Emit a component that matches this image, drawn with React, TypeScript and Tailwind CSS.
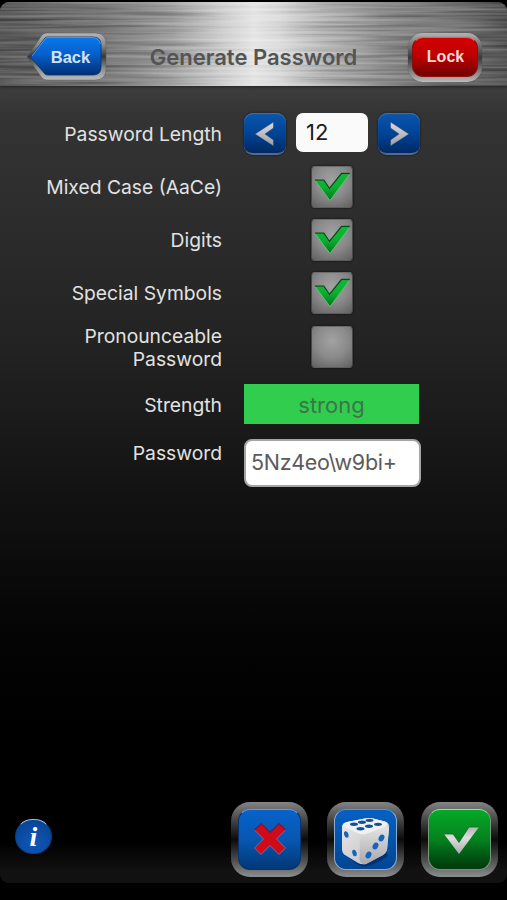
import React from "react";

const FONT = "font-['Inter','Liberation_Sans',sans-serif]";

function BrushedMetal() {
  return (
    <svg className="absolute inset-0 h-full w-full" viewBox="0 0 507 84" preserveAspectRatio="none" aria-hidden="true">
      <defs>
        <linearGradient id="metal" x1="0" x2="1" y1="0" y2="0">
          <stop offset="0" stopColor="#5a5a5a" />
          <stop offset="0.2" stopColor="#767676" />
          <stop offset="0.34" stopColor="#9e9e9e" />
          <stop offset="0.44" stopColor="#cfcfcf" />
          <stop offset="0.5" stopColor="#e6e6e6" />
          <stop offset="0.55" stopColor="#dcdcdc" />
          <stop offset="0.64" stopColor="#b4b4b4" />
          <stop offset="0.75" stopColor="#8e8e8e" />
          <stop offset="0.88" stopColor="#727272" />
          <stop offset="1" stopColor="#565656" />
        </linearGradient>
        <filter id="grain" x="0" y="0" width="100%" height="100%" colorInterpolationFilters="sRGB">
          <feTurbulence type="fractalNoise" baseFrequency="0.008 0.3" numOctaves="2" seed="8" />
          <feColorMatrix type="matrix" values="1.6 0 0 0 -0.3  1.6 0 0 0 -0.3  1.6 0 0 0 -0.3  0 0 0 0 1" />
        </filter>
      </defs>
      <rect width="507" height="84" fill="url(#metal)" />
      <rect width="507" height="84" filter="url(#grain)" opacity="0.5" style={{ mixBlendMode: "soft-light" }} />
    </svg>
  );
}

function BackButton() {
  return (
    <button className="relative ml-[26px] h-[50px] w-[82px]">
      <svg className="block" width="82" height="50" viewBox="0 0 82 50" aria-hidden="true">
        <defs>
          <linearGradient id="backRim" x1="0" x2="0" y1="0" y2="1">
            <stop offset="0" stopColor="#b4b4b4" />
            <stop offset="0.25" stopColor="#8c8c8c" />
            <stop offset="0.5" stopColor="#383838" />
            <stop offset="0.75" stopColor="#8c8c8c" />
            <stop offset="1" stopColor="#bcbcbc" />
          </linearGradient>
          <linearGradient id="backFill" x1="0" x2="0" y1="0" y2="1">
            <stop offset="0" stopColor="#0a78ec" />
            <stop offset="0.45" stopColor="#0660cc" />
            <stop offset="1" stopColor="#012e72" />
          </linearGradient>
        </defs>
        <path d="M1 25 L16 3 Q18 1 21 1 H69 Q80 1 80 12 V37 Q80 48 69 48 H21 Q18 48 16 46 Z" fill="url(#backRim)" stroke="#555" strokeOpacity="0.6" strokeWidth="0.8" />
        <path d="M4.500 25 L19 6 Q20 5 22 5 H67 Q75 5 75 13 V35 Q75 43 67 43 H22 Q20 43 19 42 Z" fill="url(#backFill)" stroke="#08336f" strokeWidth="0.8" />
        <path d="M6 24 L19.500 6.500 Q20.500 5.500 22 5.500 H67 Q73 6 74.500 12" fill="none" stroke="#8abcf2" strokeOpacity="0.7" strokeWidth="0.8" />
      </svg>
      <span className="absolute inset-0 flex items-center justify-center pl-[7px] font-['Liberation_Sans',sans-serif] text-[16.500px] font-bold text-[#d3e3fb]">Back</span>
    </button>
  );
}

function LockButton() {
  return (
    <button className="mr-[25px] h-[49px] w-[74px] rounded-[15px] bg-linear-to-b from-[#b4b4b4] via-[#3a3a3a] to-[#bcbcbc] p-[4px] pb-[5px] shadow-[0_0_1px_#444]">
      <span className="flex h-full w-full items-center justify-center rounded-[11px] border border-[#8a1010] border-t-[#e06060] bg-linear-to-b from-[#d60000] via-[#bb0000] to-[#700000] pt-px pl-px font-['Liberation_Sans',sans-serif] text-[16px] font-bold text-[#f8dada]">
        Lock
      </span>
    </button>
  );
}

function ArrowButton({ flip = false }: { flip?: boolean }) {
  return (
    <button className="h-[42px] w-[42px] rounded-[9px] border-b-2 border-[#56698a] bg-linear-to-b from-[#0c56ac] via-[#004498] to-[#002963] shadow-[inset_0_1px_1px_#3f74b8,0_0_2px_#101010]">
      <svg className={flip ? "block -scale-x-100" : "block"} width="42" height="40" viewBox="0 0 42 40" aria-hidden="true">
        <defs>
          <linearGradient id="chevron" x1="0" x2="0" y1="0" y2="1">
            <stop offset="0" stopColor="#dcdce2" />
            <stop offset="1" stopColor="#9c9ca4" />
          </linearGradient>
        </defs>
        <path d="M29.500 9 L11 21 L29.500 33 V27 L21 21 L29.500 15 Z" fill="url(#chevron)" stroke="#20406c" strokeWidth="0.5" />
      </svg>
    </button>
  );
}

function CheckTile({ checked = false }: { checked?: boolean }) {
  return (
    <span className="block h-[42px] w-[42px] rounded-[4px] border border-[#484848] border-t-[#6c6c6c] border-b-[#5c5c5c] bg-[radial-gradient(circle_at_50%_35%,#a2a2a2,#8a8a8a_50%,#606060)] shadow-[0_0_2px_#080808]">
      {checked && (
        <svg className="block" width="40" height="40" viewBox="0 0 40 40" aria-hidden="true">
          <defs>
            <linearGradient id="tick" x1="0" x2="0" y1="0" y2="1">
              <stop offset="0" stopColor="#10b838" />
              <stop offset="0.5" stopColor="#0bb030" />
              <stop offset="1" stopColor="#037020" />
            </linearGradient>
          </defs>
          <path d="M3 13.500 H11.800 L17.500 22 L29.500 7 H37.800 L18 33.500 Z" fill="url(#tick)" stroke="#5cc874" strokeWidth="0.9" />
          <path d="M3 13.200 H11.800 L17.500 21.500 L29.500 6.500 H37.800" fill="none" stroke="#064c17" strokeWidth="1.300" />
        </svg>
      )}
    </span>
  );
}

function Label({ children }: { children: React.ReactNode }) {
  return <div className="w-[222px] pt-[2px] text-right text-[19.300px] leading-[23px] text-[#e2e2e2]">{children}</div>;
}

function CheckRow({ label, checked = false }: { label: React.ReactNode; checked?: boolean }) {
  return (
    <div className="flex h-[53px] items-center gap-[22px]">
      <Label>{label}</Label>
      <div className="flex w-[175px] justify-center">
        <CheckTile checked={checked} />
      </div>
    </div>
  );
}

function MetalButton({ face, children }: { face: string; children: React.ReactNode }) {
  return (
    <button className="h-[75px] w-[77px] rounded-[19px] bg-linear-to-b from-[#858585] via-[#0c0c0c] to-[#8e8e8e] p-[7px]">
      <span className={"flex h-full w-full items-center justify-center rounded-[12px] border " + face}>{children}</span>
    </button>
  );
}

function Die() {
  return (
    <svg width="61" height="60" viewBox="0 0 61 60" aria-hidden="true">
      <defs>
        <linearGradient id="dieLeft" x1="0" x2="1" y1="0" y2="1">
          <stop offset="0" stopColor="#ececec" />
          <stop offset="1" stopColor="#b8b8bb" />
        </linearGradient>
        <linearGradient id="dieRight" x1="0" x2="0" y1="0" y2="1">
          <stop offset="0" stopColor="#e4e4e4" />
          <stop offset="1" stopColor="#a9a9ad" />
        </linearGradient>
      </defs>
      <path d="M9 43 Q20 54 28 57 Q39 56 53 46 L50 38 L12 36 Z" fill="#002a62" opacity="0.7" />
      <path d="M7 17 Q7 13 12 12 L30 8.500 Q34 7.500 38 8.500 L50 11.500 Q55 13 54 18 L52 40 Q51 43 48 45 L31 54 Q27 55 23 53 L10 45 Q7 43 7 39 Z" fill="url(#dieLeft)" />
      <path d="M25 29 Q26 25 31 24 L50 17 Q54 15 54 19 L52 40 Q51 43 48 45 L31 54 Q25 55 24.500 49 Z" fill="url(#dieRight)" />
      <path d="M8 16 Q8 13 12 12 L30 8.500 Q34 7.500 38 8.500 L50 11.500 Q55 14 50 17 L31 24 Q26 25 22 23 Z" fill="#f0f0f0" />
      <g fill="#124f9f">
        <ellipse cx="19" cy="14.200" rx="4" ry="1.700" />
        <ellipse cx="27" cy="12.200" rx="4" ry="1.700" />
        <ellipse cx="34.500" cy="10.300" rx="4" ry="1.600" />
        <ellipse cx="25.500" cy="18.700" rx="4" ry="1.700" />
        <ellipse cx="34" cy="16.300" rx="4" ry="1.700" />
        <ellipse cx="43" cy="14.300" rx="4" ry="1.600" />
      </g>
      <g fill="#1863bd">
        <ellipse cx="11.300" cy="24.500" rx="2.100" ry="3.400" transform="rotate(-18 11.300 24.500)" />
        <ellipse cx="19.500" cy="43" rx="2.100" ry="3.400" transform="rotate(-18 19.500 43)" />
        <ellipse cx="46.500" cy="28" rx="2.700" ry="3.600" transform="rotate(28 46.500 28)" />
        <ellipse cx="40.500" cy="36" rx="2.700" ry="3.600" transform="rotate(28 40.500 36)" />
        <ellipse cx="33.500" cy="45" rx="2.700" ry="3.600" transform="rotate(28 33.500 45)" />
      </g>
    </svg>
  );
}

export default function App() {
  return (
    <div className={"flex h-[900px] w-[507px] flex-col overflow-hidden bg-black pt-[2px] " + FONT}>
      <div className="flex h-[881px] flex-col overflow-hidden rounded-[9px] bg-[linear-gradient(to_bottom,#3e3e3e_84px,#343434_112px,#2d2d2d_210px,#232323_340px,#151515_470px,#050505_620px,#000_720px,#000_840px,#111_868px,#121212_881px)]">
        <header className="relative isolate flex h-[84px] shrink-0 items-center justify-between pt-[26px] shadow-[0_1px_3px_#222]">
          <div className="absolute inset-0 -z-10">
            <BrushedMetal />
          </div>
          <BackButton />
          <h1 className="-ml-[9px] pt-px text-[22px] font-semibold text-[#545454]">Generate Password</h1>
          <LockButton />
        </header>

        <main className="flex flex-1 flex-col pt-[21px]">
          <div className="flex h-[53px] items-center gap-[22px]">
            <Label>Password Length</Label>
            <div className="flex items-center gap-[10px]">
              <ArrowButton />
              <div className="mb-[2px] flex h-[39px] w-[72px] items-center rounded-[7px] bg-[#fafafa] pl-[10px] text-[22px] text-[#1c1c1c]">12</div>
              <ArrowButton flip />
            </div>
          </div>
          <CheckRow label="Mixed Case (AaCe)" checked />
          <CheckRow label="Digits" checked />
          <CheckRow label="Special Symbols" checked />
          <div className="pt-px">
            <CheckRow label={<>Pronounceable<br />Password</>} />
          </div>
          <div className="mt-[11px] flex h-[40px] items-center gap-[22px]">
            <Label>Strength</Label>
            <div className="flex h-[40px] w-[175px] items-center justify-center bg-[#31cd4f] pt-[2px] text-[22px] text-[#3e7547]">strong</div>
          </div>
          <div className="mt-[15px] flex items-start gap-[22px]">
            <div className="pt-px">
              <Label>Password</Label>
            </div>
            <div className="flex h-[48px] w-[177px] items-center rounded-[8px] border-2 border-[#a5a5a5] bg-white pb-[2px] pl-[5px] text-[21.500px] tracking-[-0.3px] text-[#5b5b5b]">5Nz4eo\w9bi+</div>
          </div>
        </main>

        <footer className="flex h-[81px] shrink-0 items-start pl-[15px]">
          <button className="mt-[17px] flex h-[35px] w-[37px] items-center justify-center rounded-full border border-[#0a3f86] border-t-[#9fb9dd] bg-[radial-gradient(circle_at_50%_70%,#1258b8,#043f8d)] font-['Liberation_Serif',serif] text-[28px] leading-none font-bold text-white italic">
            i
          </button>
          <div className="ml-[179px] flex">
            <MetalButton face="border-[#08336f] border-t-[#5f9ee6] bg-linear-to-b from-[#0862c8] via-[#0757b2] to-[#023874]">
              <svg width="60" height="59" viewBox="0 0 60 59" aria-hidden="true">
                <path d="M21 13.500 L30 22.500 L39 13.500 L45.500 20 L36.500 29 L45.500 38 L39 44.500 L30 35.500 L21 44.500 L14.500 38 L23.500 29 L14.500 20 Z" fill="#d00a18" stroke="#6c6fa6" strokeWidth="1" />
                <path d="M14.500 20 L21 13.500 L30 22.500 L39 13.500 L45.500 20" fill="none" stroke="#69163f" strokeWidth="1.200" />
              </svg>
            </MetalButton>
            <div className="mr-[17px] ml-[19px]">
              <MetalButton face="border-[#8faccf] border-t-[#4f98e6] bg-linear-to-b from-[#0660c4] via-[#0454ac] to-[#024594]">
                <Die />
              </MetalButton>
            </div>
            <MetalButton face="border-[#6f9b75] border-t-[#8be898] bg-linear-to-b from-[#04a928] via-[#04821f] to-[#00380b]">
              <svg width="60" height="59" viewBox="0 0 60 59" aria-hidden="true">
                <defs>
                  <linearGradient id="okTick" x1="0" x2="0" y1="0" y2="1">
                    <stop offset="0" stopColor="#b2b2b2" />
                    <stop offset="0.4" stopColor="#dedede" />
                    <stop offset="1" stopColor="#aaa" />
                  </linearGradient>
                </defs>
                <path d="M14 24 H23 L29 32.500 L39 17 H49 L29 44 Z" fill="url(#okTick)" />
                <path d="M14 24 H23 L29 32.500 L39 17 H49" fill="none" stroke="#11691f" strokeWidth="0.800" />
              </svg>
            </MetalButton>
          </div>
        </footer>
      </div>
    </div>
  );
}
